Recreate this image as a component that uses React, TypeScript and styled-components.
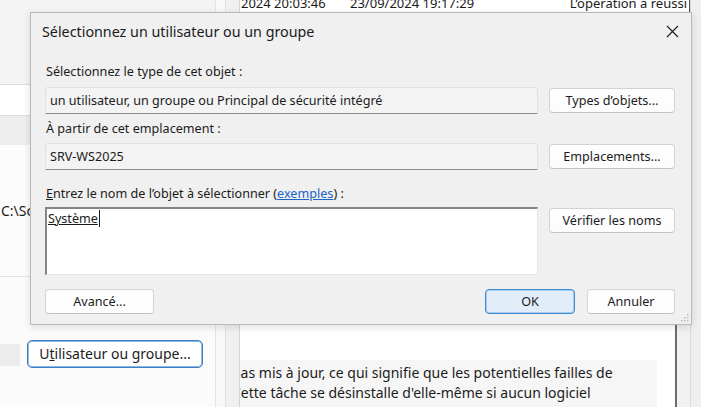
import styled, { createGlobalStyle } from 'styled-components'

const GlobalStyle = createGlobalStyle`
  html, body {
    margin: 0;
    padding: 0;
  }
  body {
    background: #f3f3f3;
    font-family: "Noto Sans", "Open Sans", sans-serif;
    color: #1b1b1b;
  }
`

const Screen = styled.div`
  position: relative;
  width: 701px;
  height: 407px;
  overflow: hidden;
  display: flex;
`

/* ---------- background window ---------- */

const LeftPane = styled.div`
  width: 215px;
  display: flex;
  flex-direction: column;
  background: #fbfbfb;
`

const PaneBand = styled.div<{ $h: number; $bg: string; $line?: boolean }>`
  height: ${p => p.$h}px;
  background: ${p => p.$bg};
  border-bottom: ${p => (p.$line ? '1px solid #dcdcdc' : 'none')};
  flex-shrink: 0;
`

const PathArea = styled.div`
  height: 131px;
  background: #fcfcfc;
  border-bottom: 1px solid #e2e2e2;
  display: flex;
  align-items: center;
  padding-left: 1px;
  font-size: 14px;
  color: #1b1b1b;
`

const LowerLeft = styled.div`
  flex: 1;
  display: flex;
  align-items: flex-start;
  gap: 7px;
  padding-top: 63px;
`

const GreyTab = styled.div`
  width: 20px;
  height: 22px;
  margin-top: 4px;
  background: #ececec;
`

const PickButton = styled.button`
  width: 176px;
  height: 28px;
  border: 1px solid #3d7fc4;
  box-shadow: inset 0 0 0 1px #8db8e3;
  border-radius: 5px;
  background: #ffffff;
  font-family: inherit;
  font-size: 14px;
  color: #1b1b1b;
  padding: 0 0 2px;
`

const Splitter = styled.div`
  width: 25px;
  display: flex;
  border-left: 1px solid #e3e3e3;
  background: #f8f8f8;
  box-sizing: border-box;
`

const SplitterBand = styled.div`
  margin-left: 9px;
  flex: 1;
  background: #f0f0f0;
  border-left: 1px solid #e2e2e2;
  border-right: 1px solid #d4d4d4;
`

const RightPane = styled.div`
  width: 450px;
  display: flex;
  flex-direction: column;
`

const TableRow = styled.div`
  height: 12px;
  display: flex;
  background: #ffffff;
  border-bottom: 1px solid #e5e5e5;
  border-right: 1px solid #505050;
  overflow: hidden;
  font-size: 13px;
  line-height: 16px;
  white-space: nowrap;
`

const Cell = styled.div<{ $w: number; $right?: boolean }>`
  width: ${p => p.$w}px;
  margin-top: -5px;
  text-align: ${p => (p.$right ? 'right' : 'left')};
  padding-left: 1px;
  padding-right: 2px;
  box-sizing: border-box;
  flex-shrink: 0;
`

const PaneBody = styled.div`
  flex: 1;
  display: flex;
`

const Content = styled.div`
  width: 435px;
  display: flex;
  flex-direction: column;
  justify-content: flex-end;
  background: #ffffff;
`

const Description = styled.div`
  width: 417px;
  height: 47px;
  background: #f6f6f6;
  overflow: hidden;
  font-size: 14px;
  line-height: 20px;
  color: #1b1b1b;
  padding-top: 3px;
  box-sizing: border-box;
`

const DescLine = styled.div`
  margin-left: -8px;
  white-space: nowrap;
`

const ScrollEdge = styled.div`
  width: 13px;
  background: #f1f1f1;
  border-left: 2px solid #6c6c6c;
`

const OuterEdge = styled.div`
  width: 11px;
  background: #efefef;
  border-left: 1px solid #dadada;
  box-sizing: border-box;
`

/* ---------- dialog window ---------- */

const Dialog = styled.div`
  position: absolute;
  left: 30px;
  top: 12px;
  width: 662px;
  height: 313px;
  box-sizing: border-box;
  background: #f0f0f0;
  border: 1px solid #b9b9b9;
  box-shadow: 0 2px 8px rgba(0, 0, 0, 0.12);
  display: flex;
  flex-direction: column;
  font-size: 12.6px;
  color: #1b1b1b;
`

const TitleBar = styled.div`
  height: 37px;
  display: flex;
  align-items: center;
  justify-content: space-between;
  padding: 0 12px 0 11px;
  flex-shrink: 0;
`

const Title = styled.div`
  font-size: 14.3px;
  padding-bottom: 1px;
`

const CloseX = styled.svg`
  width: 13px;
  height: 13px;
  margin-bottom: 1px;
`

const Body = styled.div`
  flex: 1;
  display: flex;
  flex-direction: column;
  padding: 0 16px 0 14px;
`

const Label = styled.div<{ $top: number }>`
  height: 16px;
  line-height: 16px;
  margin-top: ${p => p.$top}px;
  padding-left: 1px;
  white-space: nowrap;
`

const FieldRow = styled.div<{ $top: number }>`
  display: grid;
  grid-template-columns: 493px 126px;
  column-gap: 11px;
  align-items: start;
  margin-top: ${p => p.$top}px;
`

const ReadField = styled.div`
  height: 27px;
  box-sizing: border-box;
  background: #f3f3f3;
  border: 1px solid #e2e2e2;
  border-bottom: 1px solid #8e8e8e;
  border-radius: 3px 3px 0 0;
  display: flex;
  align-items: center;
  padding: 0 4px 1px;
  white-space: nowrap;
`

const NameBox = styled.div`
  height: 68px;
  box-sizing: border-box;
  background: #ffffff;
  border-top: 2px solid #858585;
  border-left: 2px solid #858585;
  border-right: 1px solid #e6e6e6;
  border-bottom: 1px solid #e6e6e6;
  padding: 2px 0 0 1px;
  line-height: 16px;
`

const ResolvedName = styled.span`
  text-decoration: underline;
  border-right: 1px solid #1b1b1b;
  padding-right: 1px;
`

const WinButton = styled.button<{ $w?: number; $default?: boolean }>`
  width: ${p => (p.$w ? `${p.$w}px` : '100%')};
  height: 25px;
  margin-top: 1px;
  box-sizing: border-box;
  border-radius: 4px;
  border: 1px solid ${p => (p.$default ? '#3f89cf' : '#d3d3d3')};
  border-bottom-color: ${p => (p.$default ? '#3f89cf' : '#c2c2c2')};
  box-shadow: ${p => (p.$default ? 'inset 0 0 0 1px #a8cdef' : 'none')};
  background: ${p => (p.$default ? '#e1eefa' : '#fdfdfd')};
  font-family: inherit;
  font-size: 12.6px;
  color: #1b1b1b;
  padding: 0 0 1px;
  cursor: default;
`

const Footer = styled.div`
  display: flex;
  align-items: center;
  margin-top: 13px;
`

const FooterRight = styled.div`
  margin-left: auto;
  display: flex;
  gap: 12px;
`

const Link = styled.span`
  color: #1a64c8;
  text-decoration: underline;
`

const Grip = styled.svg`
  position: absolute;
  right: 2px;
  bottom: 2px;
  width: 9px;
  height: 9px;
`

export default function App() {
  return (
    <>
      <GlobalStyle />
      <Screen>
        <LeftPane>
          <PaneBand $h={84} $bg="#f4f4f4" $line />
          <PaneBand $h={30} $bg="#ffffff" $line />
          <PaneBand $h={29} $bg="#eeeeee" />
          <PathArea>C:\Scripts\maj-logiciels.ps1</PathArea>
          <LowerLeft>
            <GreyTab />
            <PickButton>
              U<u>t</u>ilisateur ou groupe...
            </PickButton>
          </LowerLeft>
        </LeftPane>

        <Splitter>
          <SplitterBand />
        </Splitter>

        <RightPane>
          <TableRow>
            <Cell $w={109}>2024 20:03:46</Cell>
            <Cell $w={200}>23/09/2024 19:17:29</Cell>
            <Cell $w={140} $right>L’opération a réussi</Cell>
          </TableRow>
          <PaneBody>
            <Content>
              <Description>
                <DescLine>pas mis à jour, ce qui signifie que les potentielles failles de</DescLine>
                <DescLine>Cette tâche se désinstalle d'elle-même si aucun logiciel</DescLine>
              </Description>
            </Content>
            <ScrollEdge />
          </PaneBody>
        </RightPane>

        <OuterEdge />

        <Dialog>
          <TitleBar>
            <Title>Sélectionnez un utilisateur ou un groupe</Title>
            <CloseX viewBox="0 0 13 13">
              <path d="M1 1 L12 12 M12 1 L1 12" stroke="#1b1b1b" strokeWidth="1.1" fill="none" />
            </CloseX>
          </TitleBar>

          <Body>
            <Label $top={14}>Sélectionnez le type de cet objet :</Label>
            <FieldRow $top={7}>
              <ReadField>un utilisateur, un groupe ou Principal de sécurité intégré</ReadField>
              <WinButton>Types d’objets...</WinButton>
            </FieldRow>

            <Label $top={7}>À partir de cet emplacement :</Label>
            <FieldRow $top={6}>
              <ReadField>SRV-WS2025</ReadField>
              <WinButton>Emplacements...</WinButton>
            </FieldRow>

            <Label $top={16}>
              <u>E</u>ntrez le nom de l’objet à sélectionner (<Link>exemples</Link>) :
            </Label>
            <FieldRow $top={5}>
              <NameBox>
                <ResolvedName>Système</ResolvedName>
              </NameBox>
              <WinButton>Vérifier les noms</WinButton>
            </FieldRow>

            <Footer>
              <WinButton $w={109}>Avancé...</WinButton>
              <FooterRight>
                <WinButton $w={90} $default>OK</WinButton>
                <WinButton $w={88}>Annuler</WinButton>
              </FooterRight>
            </Footer>
          </Body>

          <Grip viewBox="0 0 9 9">
            <rect x="7" y="1" width="1.4" height="1.4" fill="#b5b5b5" />
            <rect x="4" y="4" width="1.4" height="1.4" fill="#b5b5b5" />
            <rect x="7" y="4" width="1.4" height="1.4" fill="#b5b5b5" />
            <rect x="1" y="7" width="1.4" height="1.4" fill="#b5b5b5" />
            <rect x="4" y="7" width="1.4" height="1.4" fill="#b5b5b5" />
            <rect x="7" y="7" width="1.4" height="1.4" fill="#b5b5b5" />
          </Grip>
        </Dialog>
      </Screen>
    </>
  )
}
